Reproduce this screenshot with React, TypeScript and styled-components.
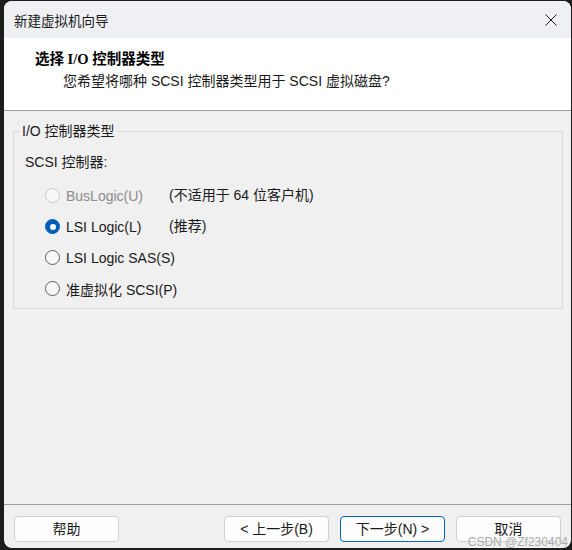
import { FC, Fragment } from 'react';
import styled, { createGlobalStyle } from 'styled-components';

const GlobalStyle = createGlobalStyle`
  html, body {
    margin: 0;
    padding: 0;
    background-color: #1c1c1c;
    overflow: hidden;
  }
  body {
    font-family: "Liberation Sans", "Noto Sans CJK SC", sans-serif;
    font-size: 14px;
    color: #1a1a1a;
  }
`;

const Screen = styled.div`
  width: 572px;
  height: 550px;
  padding: 1px 1px 0 4px;
  box-sizing: border-box;
`;

const Window = styled.div`
  position: relative;
  width: 567px;
  height: 547px;
  display: flex;
  flex-direction: column;
  border-radius: 8px;
  overflow: hidden;
  background-color: #f0f0f0;
`;

const TitleBar = styled.div`
  height: 37px;
  flex-shrink: 0;
  display: flex;
  align-items: center;
  justify-content: space-between;
  padding: 0 14px 0 10px;
  background-color: #eff0f4;
`;

const TitleText = styled.span`
  font-size: 13.5px;
  color: #1a1a1a;
`;

const CloseButton = styled.span`
  display: flex;
  align-items: center;
  justify-content: center;
  width: 12px;
  height: 12px;
`;

const Header = styled.div`
  height: 73px;
  flex-shrink: 0;
  box-sizing: border-box;
  padding: 11px 0 0 31px;
  background-color: #ffffff;
  border-bottom: 1px solid #a0a0a0;
`;

const HeaderTitle = styled.div`
  font-family: "Liberation Serif", "Noto Sans CJK SC", serif;
  font-size: 14.5px;
  font-weight: 700;
  line-height: 20px;
  color: #000;
`;

const HeaderSubtitle = styled.div`
  margin-top: 2px;
  padding-left: 28px;
  line-height: 20px;
  color: #1a1a1a;
`;

const Body = styled.div`
  flex: 1;
  padding: 11px 8px 0 9px;
`;

const GroupBox = styled.fieldset`
  margin: 0;
  height: 187px;
  box-sizing: border-box;
  padding: 12px 10px 0 11px;
  border: 1px solid #d8d8d8;
  border-radius: 0;
`;

const GroupLegend = styled.legend`
  padding: 0 3px 0 2px;
  margin-left: -5px;
  line-height: 18px;
  color: #1a1a1a;
`;

const FieldLabel = styled.div`
  line-height: 20px;
  margin-bottom: 8px;
`;

const OptionList = styled.div`
  display: grid;
  grid-template-columns: 124px auto;
  grid-auto-rows: 31px;
  align-items: center;
  padding-left: 20px;
`;

const Option = styled.label<{ $disabled?: boolean }>`
  display: flex;
  align-items: center;
  gap: 6px;
  color: ${p => (p.$disabled ? '#8c8c8c' : '#1a1a1a')};
  white-space: nowrap;
`;

const RadioCircle = styled.span<{ $checked?: boolean; $disabled?: boolean }>`
  width: 15px;
  height: 15px;
  box-sizing: border-box;
  border-radius: 50%;
  flex-shrink: 0;
  display: flex;
  align-items: center;
  justify-content: center;
  background-color: ${p => (p.$checked ? '#005fb8' : '#f7f7f7')};
  border: 1px solid
    ${p => (p.$checked ? '#005fb8' : p.$disabled ? '#c6c6c6' : '#5f5f5f')};

  &::after {
    content: '';
    display: ${p => (p.$checked ? 'block' : 'none')};
    width: 6px;
    height: 6px;
    border-radius: 50%;
    background-color: #ffffff;
  }
`;

const Note = styled.span`
  color: #1a1a1a;
  white-space: nowrap;
  margin-top: -4px;
`;

const Footer = styled.div`
  height: 44px;
  flex-shrink: 0;
  box-sizing: border-box;
  display: flex;
  align-items: flex-start;
  padding: 11px 10px 0 10px;
  border-top: 1px solid #a0a0a0;
`;

const NavGroup = styled.div`
  margin-left: auto;
  display: flex;
  gap: 11px;
`;

const Button = styled.button<{ $primary?: boolean }>`
  width: 105px;
  height: 26px;
  box-sizing: border-box;
  border-radius: 4px;
  border: 1px solid ${p => (p.$primary ? '#0067c0' : '#d0d0d0')};
  background-color: #fdfdfd;
  font-family: "Liberation Sans", "Noto Sans CJK SC", sans-serif;
  font-size: 14px;
  line-height: 14px;
  color: #1a1a1a;
  padding: 0;
`;

const Watermark = styled.span`
  position: absolute;
  right: 3px;
  bottom: 1px;
  font-family: "Liberation Sans", sans-serif;
  font-size: 12px;
  line-height: 10px;
  color: rgba(140, 140, 140, 0.75);
  text-shadow: 0 0 1px rgba(255, 255, 255, 0.8);
  pointer-events: none;
`;

const options = [
  { id: 'buslogic', label: 'BusLogic(U)', note: '(不适用于 64 位客户机)', disabled: true },
  { id: 'lsi', label: 'LSI Logic(L)', note: '(推荐)', checked: true },
  { id: 'lsisas', label: 'LSI Logic SAS(S)' },
  { id: 'pvscsi', label: '准虚拟化 SCSI(P)' },
];

const App: FC = () => {
  return (
    <>
      <GlobalStyle />
      <Screen>
        <Window>
          <TitleBar>
            <TitleText>新建虚拟机向导</TitleText>
            <CloseButton>
              <svg width="12" height="12" viewBox="0 0 12 12" fill="none" stroke="#1a1a1a" strokeWidth="1">
                <line x1="0.5" y1="0.5" x2="11.5" y2="11.5" />
                <line x1="11.5" y1="0.5" x2="0.5" y2="11.5" />
              </svg>
            </CloseButton>
          </TitleBar>

          <Header>
            <HeaderTitle>选择 I/O 控制器类型</HeaderTitle>
            <HeaderSubtitle>您希望将哪种 SCSI 控制器类型用于 SCSI 虚拟磁盘?</HeaderSubtitle>
          </Header>

          <Body>
            <GroupBox>
              <GroupLegend>I/O 控制器类型</GroupLegend>
              <FieldLabel>SCSI 控制器:</FieldLabel>
              <OptionList>
                {options.map(opt => (
                  <Fragment key={opt.id}>
                    <Option $disabled={opt.disabled}>
                      <RadioCircle $checked={opt.checked} $disabled={opt.disabled} />
                      {opt.label}
                    </Option>
                    <Note>{opt.note ?? ''}</Note>
                  </Fragment>
                ))}
              </OptionList>
            </GroupBox>
          </Body>

          <Footer>
            <Button>帮助</Button>
            <NavGroup>
              <Button>&lt; 上一步(B)</Button>
              <Button $primary>下一步(N) &gt;</Button>
              <Button>取消</Button>
            </NavGroup>
          </Footer>

          <Watermark>CSDN @Zf230404</Watermark>
        </Window>
      </Screen>
    </>
  );
};

export default App;
